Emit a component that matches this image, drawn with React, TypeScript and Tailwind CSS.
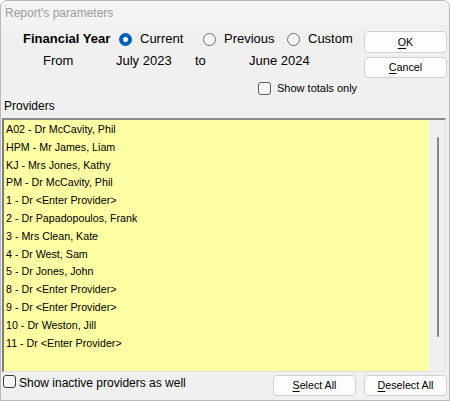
import React from 'react';

const providers = [
  'A02 - Dr McCavity, Phil',
  'HPM - Mr James, Liam',
  'KJ - Mrs Jones, Kathy',
  'PM - Dr McCavity, Phil',
  '1 - Dr <Enter Provider>',
  '2 - Dr Papadopoulos, Frank',
  '3 - Mrs Clean, Kate',
  '4 - Dr West, Sam',
  '5 - Dr Jones, John',
  '8 - Dr <Enter Provider>',
  '9 - Dr <Enter Provider>',
  '10 - Dr Weston, Jill',
  '11 - Dr <Enter Provider>',
];

const Radio = ({ checked }: { checked?: boolean }) =>
  checked ? (
    <span className="flex h-[13px] w-[13px] shrink-0 items-center justify-center rounded-full bg-[#005fb8]">
      <span className="h-[5px] w-[5px] rounded-full bg-white" />
    </span>
  ) : (
    <span className="h-[13px] w-[13px] shrink-0 rounded-full border border-[#6e6e6e] bg-[#f7f7f7]" />
  );

const RadioOption = ({ label, checked, className }: { label: string; checked?: boolean; className: string }) => (
  <div className={`flex items-center gap-[8px] ${className}`}>
    <Radio checked={checked} />
    <span>{label}</span>
  </div>
);

const Checkbox = ({ className }: { className: string }) => (
  <span className={`h-[13px] w-[13px] shrink-0 rounded-[3px] border bg-[#f7f7f7] ${className}`} />
);

const DlgButton = ({ hot, rest, className }: { hot: string; rest: string; className: string }) => (
  <button className={`flex items-center justify-center rounded-[4px] border border-[#d0d0d0] bg-[#fdfdfd] text-[10.7px] text-black ${className}`}>
    <span>
      <span className="underline underline-offset-[2px]">{hot}</span>
      {rest}
    </span>
  </button>
);

const App: React.FC = () => {
  return (
    <div className="h-[401px] w-[450px] overflow-hidden rounded-t-[7px] border border-[#b9b9b9] bg-[#f0f0f0] font-['Liberation_Sans',Arial,sans-serif] text-black">
      <div className="flex h-[24px] items-center bg-[#f3f3f3] pl-[4px] text-[12px] text-[#9c9c9c]">
        Report's parameters
      </div>

      <div className="flex">
        <div className="w-[363px]">
          <div className="mt-[6px] flex h-[16px] items-center text-[13px]">
            <span className="ml-[22px] w-[96px] font-bold">Financial Year</span>
            <RadioOption label="Current" checked className="w-[84px]" />
            <RadioOption label="Previous" className="w-[84px]" />
            <RadioOption label="Custom" className="" />
          </div>
          <div className="mt-[6px] flex h-[16px] items-center text-[13px]">
            <span className="ml-[42px] w-[73px]">From</span>
            <span className="w-[79px]">July 2023</span>
            <span className="w-[54px]">to</span>
            <span>June 2024</span>
          </div>
          <div className="mt-[12px] flex h-[14px] items-center gap-[6px] text-[11px]">
            <Checkbox className="ml-[257px] border-[#5c5c5c]" />
            <span>Show totals only</span>
          </div>
          <div className="mt-[4px] flex h-[14px] items-center pl-[3px] text-[12px]">Providers</div>
        </div>
        <div className="mt-[6px] flex w-[83px] flex-col gap-[4px]">
          <DlgButton hot="O" rest="K" className="h-[22px] w-[83px]" />
          <DlgButton hot="C" rest="ancel" className="h-[21px] w-[83px]" />
        </div>
      </div>

      <div className="ml-[1px] mt-[5px] flex h-[254px] w-[444px] border-b border-l-2 border-r border-t-2 border-b-[#e3e3e3] border-l-[#7c7c7c] border-r-[#e3e3e3] border-t-[#8a8a8a]">
        <div className="w-[425px] bg-[#ffffa4] pl-[2px] pt-[1px] text-[10.7px] leading-[17.8px]">
          {providers.map((p) => (
            <div key={p}>{p}</div>
          ))}
        </div>
        <div className="w-px bg-white" />
        <div className="flex w-[15px] flex-col bg-[#f0f0f0] pl-[7px] pt-[17px]">
          <div className="h-[200px] w-[2px] rounded-full bg-[#858585]" />
        </div>
      </div>

      <div className="flex items-start pt-[3px]">
        <Checkbox className="ml-[2px] border-[#3c3c3c]" />
        <span className="ml-[3px] mt-px text-[12px] leading-[14px]">Show inactive providers as well</span>
        <div className="ml-auto mr-[2px] flex gap-[8px]">
          <DlgButton hot="S" rest="elect All" className="h-[21px] w-[83px]" />
          <DlgButton hot="D" rest="eselect All" className="h-[21px] w-[83px]" />
        </div>
      </div>
    </div>
  );
};

export default App;
